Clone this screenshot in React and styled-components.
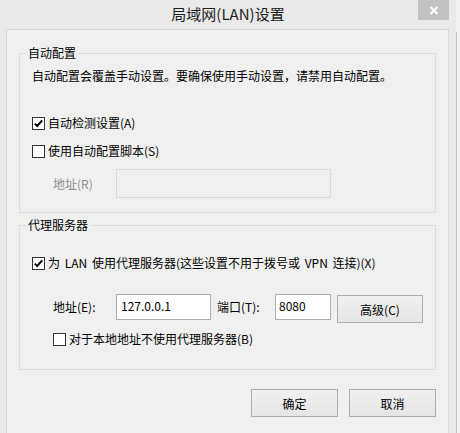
import styled, { createGlobalStyle } from "styled-components"

const Global = createGlobalStyle`
  html, body {
    margin: 0;
    padding: 0;
    background: #f2f2f2;
  }
  body {
    font-family: "Noto Sans CJK SC", "Noto Sans", sans-serif;
    font-size: 12px;
    color: #000;
  }
`

const Page = styled.div`
  display: flex;
  width: 460px;
  height: 433px;
  overflow: hidden;
`

const Dialog = styled.div`
  width: 456px;
  height: 433px;
  background: #e9e9e9;
  display: flex;
  flex-direction: column;
`

const Edge = styled.div`
  width: 1px;
  margin-top: 32px;
  background: #c4c4c4;
`

const TitleBar = styled.div`
  height: 29px;
  display: grid;
  grid-template-columns: 1fr auto 1fr;
  align-items: start;
`

const Title = styled.div`
  grid-column: 2;
  font-size: 15px;
  line-height: 20px;
  margin-top: 4px;
  color: #1e1e1e;
`

const CloseBtn = styled.div`
  grid-column: 3;
  justify-self: end;
  width: 31px;
  height: 20px;
  margin-right: 7px;
  background: #c2c2c2;
  display: flex;
  align-items: center;
  justify-content: center;
`

const Client = styled.div`
  margin: 0 7px 0 6px;
  flex: 1;
  background: #f0f0f0;
  border: 1px solid #d6d6d6;
  border-bottom: none;
  padding: 15px 12px 0 12px;
  display: flex;
  flex-direction: column;
`

const Group = styled.fieldset`
  margin: ${p => p.$top || 0}px 0 0 0;
  padding: 0 12px ${p => p.$bottom || 0}px 12px;
  border: 1px solid #dcdcdc;
  min-width: 0;
`

const Legend = styled.legend`
  margin-left: -6px;
  padding: 0 2px;
  line-height: 16px;
`

const Note = styled.div`
  margin-top: 7px;
  line-height: 16px;
`

const Option = styled.label`
  display: flex;
  align-items: center;
  gap: 3px;
  height: 16px;
  line-height: 16px;
  margin-top: ${p => p.$top}px;
  padding-left: ${p => p.$indent || 0}px;
  word-spacing: ${p => p.$spread || 0}px;
  white-space: nowrap;
`

const Box = styled.span`
  width: 13px;
  height: 13px;
  box-sizing: border-box;
  border: 1px solid #333;
  background: #fff;
  display: flex;
  align-items: center;
  justify-content: center;
  flex: none;
`

const Row = styled.div`
  display: flex;
  align-items: flex-start;
  margin-top: ${p => p.$top}px;
  padding-left: 21px;
`

const Label = styled.span`
  width: ${p => p.$w}px;
  flex: none;
  color: ${p => (p.$dim ? "#8f8f8f" : "#000")};
  line-height: 16px;
  margin-top: ${p => p.$dy || 0}px;
`

const Field = styled.input`
  box-sizing: border-box;
  width: ${p => p.$w}px;
  height: ${p => p.$h || 26}px;
  margin: 0 ${p => p.$gap || 0}px 0 0;
  padding: 0 0 4px ${p => p.$pad || 4}px;
  border: 1px solid ${p => (p.disabled ? "#d9d9d9" : "#abadb3")};
  background: ${p => (p.disabled ? "#f0f0f0" : "#fff")};
  font-family: "Noto Sans CJK SC", "Noto Sans", sans-serif;
  font-size: 12px;
  color: #000;
  outline: none;
`

const Button = styled.button`
  box-sizing: border-box;
  width: 87px;
  height: 28px;
  margin-top: ${p => p.$top || 0}px;
  border: 1px solid #adadad;
  background: linear-gradient(#f0f0f0, #e5e5e5);
  font-family: "Noto Sans CJK SC", "Noto Sans", sans-serif;
  font-size: 12px;
  color: #000;
  padding: 0;
`

const Footer = styled.div`
  display: flex;
  justify-content: flex-end;
  gap: 11px;
  margin-top: 19px;
`

const Check = ({ on }) => (
  <Box>
    {on && (
      <svg width="11" height="11" viewBox="0 0 11 11">
        <path d="M1.8 5.6 L4.2 8 L9.2 2.4" fill="none" stroke="#000" strokeWidth="1.9" />
      </svg>
    )}
  </Box>
)

const App = () => {
  return (
    <Page>
      <Global />
      <Dialog>
        <TitleBar>
          <Title>局域网(LAN)设置</Title>
          <CloseBtn>
            <svg width="10" height="9" viewBox="0 0 10 9">
              <path d="M1.5 1 L8.5 8 M8.5 1 L1.5 8" stroke="#fff" strokeWidth="2" />
            </svg>
          </CloseBtn>
        </TitleBar>
        <Client>
          <Group $bottom={14}>
            <Legend>自动配置</Legend>
            <Note>自动配置会覆盖手动设置。要确保使用手动设置，请禁用自动配置。</Note>
            <Option $top={31}>
              <Check on />
              自动检测设置(A)
            </Option>
            <Option $top={12}>
              <Check />
              使用自动配置脚本(S)
            </Option>
            <Row $top={10}>
              <Label $w={63} $dim $dy={7}>地址(R)</Label>
              <Field $w={215} $h={29} disabled />
            </Row>
          </Group>
          <Group $top={4} $bottom={22}>
            <Legend>代理服务器</Legend>
            <Option $top={22} $spread={2}>
              <Check on />
              为 LAN 使用代理服务器(这些设置不用于拨号或 VPN 连接)(X)
            </Option>
            <Row $top={23}>
              <Label $w={63} $dy={5}>地址(E):</Label>
              <Field $w={95} $gap={6} defaultValue="127.0.0.1" readOnly />
              <Label $w={58} $dy={5}>端口(T):</Label>
              <Field $w={56} $gap={6} $pad={3} defaultValue="8080" readOnly />
              <Button $top={1}>高级(C)</Button>
            </Row>
            <Option $top={8} $indent={21}>
              <Check />
              对于本地地址不使用代理服务器(B)
            </Option>
          </Group>
          <Footer>
            <Button>确定</Button>
            <Button>取消</Button>
          </Footer>
        </Client>
      </Dialog>
      <Edge />
    </Page>
  )
}

export default App
